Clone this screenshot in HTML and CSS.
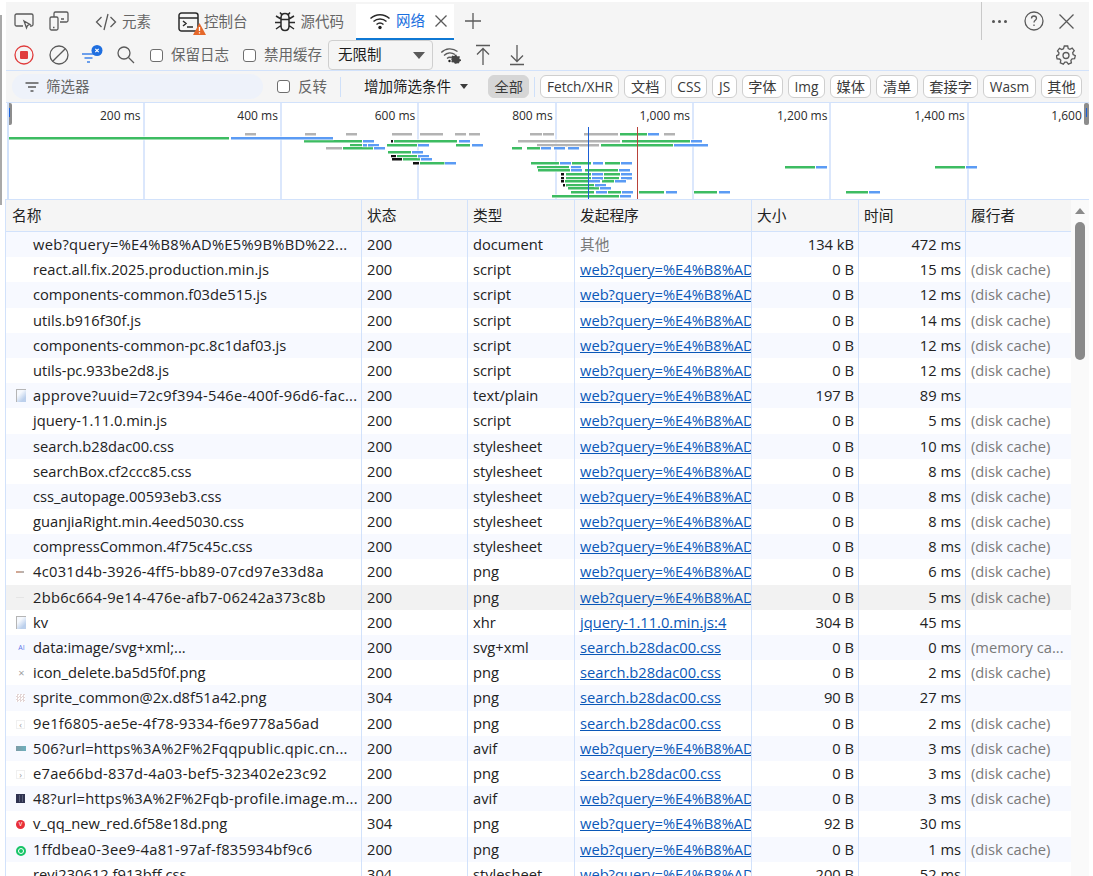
FILE: index.html
```html
<!DOCTYPE html>
<html lang="zh-CN">
<head>
<meta charset="utf-8">
<title>DevTools 网络</title>
<link rel="stylesheet" href="styles.css">
</head>
<body>
<div class="edge"></div>
<main class="devtools">
  <header class="tabbar">
    <div class="tool-icons">
      <svg class="ic" width="22" height="22" viewBox="0 0 22 22"><path d="M10 16H3.500A1.500 1.500 0 0 1 2 14.500V5.500A1.500 1.500 0 0 1 3.500 4h15A1.500 1.500 0 0 1 20 5.500V14.500A1.500 1.500 0 0 1 18.500 16H17M11 11l6 3.500-2.500 1-1 2.500z"/></svg>
      <svg class="ic" width="22" height="22" viewBox="0 0 22 22"><path d="M6 7V3.500A1.500 1.500 0 0 1 7.500 2h11A1.500 1.500 0 0 1 20 3.500V10.500A1.500 1.500 0 0 1 18.500 12H12M3.500 7h5A1.500 1.500 0 0 1 10 8.500v10A1.500 1.500 0 0 1 8.500 20h-5A1.500 1.500 0 0 1 2 18.500v-10A1.500 1.500 0 0 1 3.500 7zM5 17.500h1.500M13 9h3"/></svg>
    </div>
    <div class="tab">
      <svg class="ic" width="22" height="22" viewBox="0 0 22 22"><path d="M6.500 6 1.500 11l5 5M15.500 6l5 5-5 5M13 3 9 19"/></svg>
      <span>元素</span>
    </div>
    <div class="tab tab-console">
      <svg class="ic ic-dark" width="22" height="24" viewBox="0 0 22 24"><path d="M3.500 3h14A2.500 2.500 0 0 1 20 5.500v13a2.500 2.500 0 0 1-2.500 2.500h-14A2.500 2.500 0 0 1 1 18.500v-13A2.500 2.500 0 0 1 3.500 3zM1 8h19M5 11l3 2.500L5 16M9 17h6"/></svg>
      <svg class="warn" width="13" height="12" viewBox="0 0 13 12"><path class="warn-bg" d="M6.500 0 13 12H0z"/><path class="warn-mark" d="M6.500 4v4M6.500 9.200v1.300"/></svg>
      <span>控制台</span>
    </div>
    <div class="tab tab-bug">
      <svg class="ic ic-dark" width="22" height="22" viewBox="0 0 22 22"><path d="M7 7c0-3 1.500-4.500 4-4.500S15 4 15 7v8c0 3-1.500 4.500-4 4.500S7 18 7 15zM7 8.500h8M6 1.500 8 4M16 1.500 14 4M2 5l5 3M20 5l-5 3M1 11.500h6M21 11.500h-6M2 18l5-3.500M20 18l-5-3.500"/></svg>
      <span>源代码</span>
    </div>
    <div class="tab tab-active">
      <svg class="ic ic-dark" width="22" height="20" viewBox="0 0 22 20"><path d="M1.500 7.500C7 2.500 15 2.500 20.500 7.500M4.500 10.500c3.700-3.300 9.300-3.300 13 0M7.500 13.500c2-1.700 5-1.700 7 0"/><circle class="dot" cx="11" cy="16.500" r="1.700"/></svg>
      <span>网络</span>
      <svg class="ic" width="12" height="12" viewBox="0 0 12 12"><path d="M.5.500l11 11M11.500.500l-11 11"/></svg>
    </div>
    <svg class="ic plus" width="16" height="16" viewBox="0 0 16 16"><path d="M8 0v16M0 8h16"/></svg>
    <div class="tab-right">
      <span class="more"><i></i><i></i><i></i></span>
      <svg class="ic" width="20" height="20" viewBox="0 0 20 20"><circle cx="10" cy="10" r="9"/><path d="M7.500 7.500C7.500 6 8.700 5 10 5s2.500 1 2.500 2.300c0 2-2.500 2-2.500 4.200M10 13.500V15"/></svg>
      <svg class="ic" width="15" height="15" viewBox="0 0 15 15"><path d="M.5.500l14 14M14.500.500l-14 14"/></svg>
    </div>
  </header>

  <section class="toolbar">
    <svg class="record" width="20" height="20" viewBox="0 0 20 20"><circle class="rec-ring" cx="10" cy="10" r="9"/><rect class="rec-dot" x="6" y="6" width="8" height="8" rx="1"/></svg>
    <svg class="ic ic-clear" width="20" height="20" viewBox="0 0 20 20"><circle cx="10" cy="10" r="9"/><path d="M3.700 16.300 16.300 3.700"/></svg>
    <span class="filter-toggle">
      <svg width="22" height="20" viewBox="0 0 22 20"><path class="fl" d="M1 9h13M3.500 13h8M6 17h3"/><circle class="bd" cx="16" cy="5.500" r="5.500"/><path class="bdx" d="M14.300 3.800l3.400 3.400M17.700 3.800l-3.400 3.400"/></svg>
    </span>
    <svg class="ic ic-find" width="18" height="18" viewBox="0 0 18 18"><circle cx="7" cy="7" r="6"/><path d="m11.500 11.500 5.500 5.500"/></svg>
    <label class="check"><i class="box"></i>保留日志</label>
    <label class="check"><i class="box"></i>禁用缓存</label>
    <div class="select"><span>无限制</span><i class="caret-big"></i></div>
    <svg class="ic ic-net" width="21" height="18" viewBox="0 0 20 18"><path d="M.8 6.500C5 2 12 1.500 17 5.500M3.500 9.500c3-3 7.500-3.300 11-1M6.500 12.500c1.500-1.300 3.500-1.500 5-.8"/><circle class="dot" cx="9" cy="15" r="1.200"/><path class="gearfill" d="M15 8.500l1 .3.300 1.300 1.200.5 1.100-.7.900 1-.7 1.100.5 1.200 1.200.3v1.400l-1.200.3-.5 1.200-.9 1.100-1.300-.2-1 .5h-1.300l-.5-1-1.200-.5-1.100.3-.7-1 .5-1.200-.5-1.200-1-.4V13l1.300-.3.400-1.200-.5-1.100.9-.9 1.200.5 1.200-.5z"/></svg>
    <svg class="ic ic-up" width="16" height="22" viewBox="0 0 16 22"><path d="M1 1.500h14M8 21V5M2 10.500 8 4.500l6 6"/></svg>
    <svg class="ic ic-down" width="16" height="22" viewBox="0 0 16 22"><path d="M1 20.500h14M8 1v16M2 11.500l6 6 6-6"/></svg>
    <svg class="ic gear" width="20" height="20" viewBox="0 0 20 20"><path d="M8.300 1h3.400l.5 2.500 1.700.8 2.300-1.200 2 2.600-1.500 1.900.4 1.900 2.200 1.100-.7 3-2.500.2-1.200 1.500.5 2.500-3 1.400-1.600-2h-1.900l-1.600 2-3-1.400.5-2.500L3.600 14l-2.500-.2-.7-3 2.200-1.100.4-1.900L1.500 5.900l2-2.600 2.300 1.200 1.700-.8z"/><circle cx="10" cy="10.500" r="3"/></svg>
  </section>

  <section class="filterbar">
    <div class="search">
      <svg class="ic" width="14" height="10" viewBox="0 0 14 10"><path d="M.5 1h13M3 5h8M5.500 9h3"/></svg>
      <span>筛选器</span>
    </div>
    <label class="check invert"><i class="box"></i>反转</label>
    <i class="vr"></i>
    <div class="more-filters">增加筛选条件<i class="caret"></i></div>
    <span class="chip chip-on">全部</span>
    <i class="vr"></i>
    <span class="chip chip-en">Fetch/XHR</span>
    <span class="chip">文档</span>
    <span class="chip chip-en">CSS</span>
    <span class="chip chip-en">JS</span>
    <span class="chip">字体</span>
    <span class="chip chip-en">Img</span>
    <span class="chip">媒体</span>
    <span class="chip">清单</span>
    <span class="chip">套接字</span>
    <span class="chip chip-en">Wasm</span>
    <span class="chip">其他</span>
  </section>

  <section class="overview">
    <div class="grid-cols">
      <div class="tick">200 ms</div>
      <div class="tick">400 ms</div>
      <div class="tick">600 ms</div>
      <div class="tick">800 ms</div>
      <div class="tick">1,000 ms</div>
      <div class="tick">1,200 ms</div>
      <div class="tick">1,400 ms</div>
      <div class="tick tick-last">1,600</div>
    </div>
    <svg class="bars" width="1082" height="96" viewBox="7 103 1082 96">
      <g class="k">
        <rect x="245" y="134" width="11" height="3"/><rect x="305" y="134" width="11" height="3"/><rect x="346" y="134" width="11" height="3"/><rect x="392" y="134" width="20" height="3"/><rect x="420" y="134" width="23" height="3"/><rect x="455" y="134" width="11" height="3"/><rect x="469" y="134" width="11" height="3"/><rect x="530" y="134" width="12" height="3"/><rect x="543" y="134" width="11" height="3"/><rect x="584" y="134" width="34" height="3"/><rect x="629" y="134" width="11" height="3"/><rect x="664" y="134" width="11" height="3"/>
        <rect x="518" y="141" width="102" height="3"/><rect x="537" y="145" width="62" height="3"/><rect x="326" y="148" width="16" height="3"/>
      </g>
      <g class="g">
        <rect x="9" y="138" width="220" height="3"/><rect x="620" y="134" width="27" height="3"/>
        <rect x="304" y="141" width="58" height="3"/><rect x="394" y="141" width="63" height="3"/><rect x="622" y="141" width="68" height="3"/>
        <rect x="350" y="145" width="12" height="3"/><rect x="387" y="145" width="30" height="3"/><rect x="456" y="145" width="14" height="3"/><rect x="601" y="145" width="72" height="3"/>
        <rect x="343" y="148" width="30" height="3"/><rect x="512" y="148" width="10" height="3"/><rect x="527" y="148" width="13" height="3"/>
        <rect x="388" y="152" width="23" height="3"/><rect x="397" y="156" width="20" height="3"/><rect x="403" y="159" width="17" height="3"/>
        <rect x="420" y="163" width="25" height="3"/><rect x="531" y="163" width="28" height="3"/><rect x="572" y="163" width="19" height="3"/><rect x="605" y="163" width="15" height="3"/>
        <rect x="537" y="167" width="32" height="3"/><rect x="785" y="167" width="30" height="3"/><rect x="935" y="167" width="30" height="3"/>
        <rect x="538" y="170" width="32" height="3"/><rect x="585" y="170" width="33" height="3"/>
        <rect x="566" y="174" width="25" height="3"/><rect x="604" y="174" width="16" height="3"/>
        <rect x="566" y="178" width="25" height="3"/><rect x="604" y="178" width="15" height="3"/>
        <rect x="565" y="181" width="24" height="3"/><rect x="602" y="181" width="12" height="3"/>
        <rect x="566" y="185" width="28" height="3"/><rect x="568" y="188" width="31" height="3"/>
        <rect x="571" y="192" width="23" height="3"/><rect x="608" y="192" width="13" height="3"/><rect x="639" y="192" width="25" height="3"/><rect x="694" y="192" width="23" height="3"/><rect x="846" y="192" width="22" height="3"/>
        <rect x="552" y="196" width="67" height="3"/>
      </g>
      <g class="b">
        <rect x="231" y="138" width="102" height="3"/><rect x="648" y="134" width="11" height="3"/>
        <rect x="363" y="141" width="11" height="3"/><rect x="459" y="141" width="11" height="3"/><rect x="691" y="141" width="11" height="3"/>
        <rect x="363" y="145" width="4" height="3"/><rect x="368" y="145" width="11" height="3"/><rect x="418" y="145" width="11" height="3"/><rect x="472" y="145" width="11" height="3"/><rect x="674" y="145" width="34" height="3"/>
        <rect x="374" y="148" width="11" height="3"/><rect x="541" y="148" width="10" height="3"/><rect x="554" y="148" width="11" height="3"/><rect x="568" y="148" width="11" height="3"/>
        <rect x="412" y="152" width="11" height="3"/><rect x="418" y="156" width="11" height="3"/><rect x="421" y="159" width="11" height="3"/>
        <rect x="445" y="163" width="11" height="3"/><rect x="560" y="163" width="11" height="3"/><rect x="593" y="163" width="10" height="3"/><rect x="621" y="163" width="11" height="3"/>
        <rect x="571" y="167" width="10" height="3"/><rect x="816" y="167" width="11" height="3"/><rect x="966" y="167" width="11" height="3"/>
        <rect x="571" y="170" width="11" height="3"/><rect x="619" y="170" width="11" height="3"/>
        <rect x="592" y="174" width="11" height="3"/><rect x="621" y="174" width="11" height="3"/>
        <rect x="592" y="178" width="11" height="3"/><rect x="621" y="178" width="11" height="3"/>
        <rect x="589" y="181" width="11" height="3"/><rect x="615" y="181" width="11" height="3"/>
        <rect x="595" y="185" width="11" height="3"/><rect x="600" y="188" width="11" height="3"/>
        <rect x="596" y="192" width="11" height="3"/><rect x="622" y="192" width="11" height="3"/><rect x="666" y="192" width="11" height="3"/><rect x="719" y="192" width="11" height="3"/><rect x="869" y="192" width="11" height="3"/>
        <rect x="620" y="196" width="11" height="3"/>
      </g>
      <g class="d">
        <rect x="391" y="141" width="2" height="3"/><rect x="391" y="156" width="5" height="3"/><rect x="392" y="159" width="10" height="3"/><rect x="413" y="163" width="6" height="3"/><rect x="561" y="174" width="3" height="3"/><rect x="561" y="178" width="3" height="3"/><rect x="561" y="181" width="3" height="3"/><rect x="563" y="185" width="2" height="3"/>
      </g>
      <rect class="line-dcl" x="588" y="127" width="1" height="72"/>
      <rect class="line-load" x="637" y="127" width="1" height="72"/>
    </svg>
    <i class="handle handle-l"></i>
    <i class="handle handle-r"></i>
  </section>

  <section class="network">
    <div class="table">
      <div class="row head"><div>名称</div><div>状态</div><div>类型</div><div>发起程序</div><div>大小</div><div>时间</div><div>履行者</div></div>
      <div class="row"><div class="name wide">web?query=%E4%B8%AD%E5%9B%BD%22...</div><div>200</div><div>document</div><div class="muted">其他</div><div class="num">134 kB</div><div class="num">472 ms</div><div></div></div>
      <div class="row"><div class="name">react.all.fix.2025.production.min.js</div><div>200</div><div>script</div><div class="link">web?query=%E4%B8%AD%E5%9B%BD</div><div class="num">0 B</div><div class="num">15 ms</div><div class="muted">(disk cache)</div></div>
      <div class="row"><div class="name">components-common.f03de515.js</div><div>200</div><div>script</div><div class="link">web?query=%E4%B8%AD%E5%9B%BD</div><div class="num">0 B</div><div class="num">12 ms</div><div class="muted">(disk cache)</div></div>
      <div class="row"><div class="name">utils.b916f30f.js</div><div>200</div><div>script</div><div class="link">web?query=%E4%B8%AD%E5%9B%BD</div><div class="num">0 B</div><div class="num">14 ms</div><div class="muted">(disk cache)</div></div>
      <div class="row"><div class="name">components-common-pc.8c1daf03.js</div><div>200</div><div>script</div><div class="link">web?query=%E4%B8%AD%E5%9B%BD</div><div class="num">0 B</div><div class="num">12 ms</div><div class="muted">(disk cache)</div></div>
      <div class="row"><div class="name">utils-pc.933be2d8.js</div><div>200</div><div>script</div><div class="link">web?query=%E4%B8%AD%E5%9B%BD</div><div class="num">0 B</div><div class="num">12 ms</div><div class="muted">(disk cache)</div></div>
      <div class="row"><div class="name wide"><i class="fi fi-doc"></i>approve?uuid=72c9f394-546e-400f-96d6-fac...</div><div>200</div><div>text/plain</div><div class="link">web?query=%E4%B8%AD%E5%9B%BD</div><div class="num">197 B</div><div class="num">89 ms</div><div></div></div>
      <div class="row"><div class="name">jquery-1.11.0.min.js</div><div>200</div><div>script</div><div class="link">web?query=%E4%B8%AD%E5%9B%BD</div><div class="num">0 B</div><div class="num">5 ms</div><div class="muted">(disk cache)</div></div>
      <div class="row"><div class="name">search.b28dac00.css</div><div>200</div><div>stylesheet</div><div class="link">web?query=%E4%B8%AD%E5%9B%BD</div><div class="num">0 B</div><div class="num">10 ms</div><div class="muted">(disk cache)</div></div>
      <div class="row"><div class="name">searchBox.cf2ccc85.css</div><div>200</div><div>stylesheet</div><div class="link">web?query=%E4%B8%AD%E5%9B%BD</div><div class="num">0 B</div><div class="num">8 ms</div><div class="muted">(disk cache)</div></div>
      <div class="row"><div class="name">css_autopage.00593eb3.css</div><div>200</div><div>stylesheet</div><div class="link">web?query=%E4%B8%AD%E5%9B%BD</div><div class="num">0 B</div><div class="num">8 ms</div><div class="muted">(disk cache)</div></div>
      <div class="row"><div class="name">guanjiaRight.min.4eed5030.css</div><div>200</div><div>stylesheet</div><div class="link">web?query=%E4%B8%AD%E5%9B%BD</div><div class="num">0 B</div><div class="num">8 ms</div><div class="muted">(disk cache)</div></div>
      <div class="row"><div class="name">compressCommon.4f75c45c.css</div><div>200</div><div>stylesheet</div><div class="link">web?query=%E4%B8%AD%E5%9B%BD</div><div class="num">0 B</div><div class="num">8 ms</div><div class="muted">(disk cache)</div></div>
      <div class="row"><div class="name wide"><i class="fi fi-dash"></i>4c031d4b-3926-4ff5-bb89-07cd97e33d8a</div><div>200</div><div>png</div><div class="link">web?query=%E4%B8%AD%E5%9B%BD</div><div class="num">0 B</div><div class="num">6 ms</div><div class="muted">(disk cache)</div></div>
      <div class="row hover"><div class="name wide"><i class="fi fi-faint"></i>2bb6c664-9e14-476e-afb7-06242a373c8b</div><div>200</div><div>png</div><div class="link">web?query=%E4%B8%AD%E5%9B%BD</div><div class="num">0 B</div><div class="num">5 ms</div><div class="muted">(disk cache)</div></div>
      <div class="row"><div class="name"><i class="fi fi-doc"></i>kv</div><div>200</div><div>xhr</div><div class="link">jquery-1.11.0.min.js:4</div><div class="num">304 B</div><div class="num">45 ms</div><div></div></div>
      <div class="row"><div class="name"><i class="fi fi-ai">AI</i>data:image/svg+xml;...</div><div>200</div><div>svg+xml</div><div class="link">search.b28dac00.css</div><div class="num">0 B</div><div class="num">0 ms</div><div class="muted">(memory ca...</div></div>
      <div class="row"><div class="name"><i class="fi fi-x">×</i>icon_delete.ba5d5f0f.png</div><div>200</div><div>png</div><div class="link">search.b28dac00.css</div><div class="num">0 B</div><div class="num">2 ms</div><div class="muted">(disk cache)</div></div>
      <div class="row"><div class="name"><i class="fi fi-sprite"></i>sprite_common@2x.d8f51a42.png</div><div>304</div><div>png</div><div class="link">search.b28dac00.css</div><div class="num">90 B</div><div class="num">27 ms</div><div></div></div>
      <div class="row"><div class="name wide"><i class="fi fi-box">‹</i>9e1f6805-ae5e-4f78-9334-f6e9778a56ad</div><div>200</div><div>png</div><div class="link">search.b28dac00.css</div><div class="num">0 B</div><div class="num">2 ms</div><div class="muted">(disk cache)</div></div>
      <div class="row"><div class="name wide"><i class="fi fi-thumb"></i>506?url=https%3A%2F%2Fqqpublic.qpic.cn...</div><div>200</div><div>avif</div><div class="link">web?query=%E4%B8%AD%E5%9B%BD</div><div class="num">0 B</div><div class="num">3 ms</div><div class="muted">(disk cache)</div></div>
      <div class="row"><div class="name wide"><i class="fi fi-box">›</i>e7ae66bd-837d-4a03-bef5-323402e23c92</div><div>200</div><div>png</div><div class="link">search.b28dac00.css</div><div class="num">0 B</div><div class="num">3 ms</div><div class="muted">(disk cache)</div></div>
      <div class="row"><div class="name wide"><i class="fi fi-qr"></i>48?url=https%3A%2F%2Fqb-profile.image.m...</div><div>200</div><div>avif</div><div class="link">web?query=%E4%B8%AD%E5%9B%BD</div><div class="num">0 B</div><div class="num">3 ms</div><div class="muted">(disk cache)</div></div>
      <div class="row"><div class="name"><i class="fi fi-red">v</i>v_qq_new_red.6f58e18d.png</div><div>304</div><div>png</div><div class="link">web?query=%E4%B8%AD%E5%9B%BD</div><div class="num">92 B</div><div class="num">30 ms</div><div></div></div>
      <div class="row"><div class="name wide"><i class="fi fi-green"></i>1ffdbea0-3ee9-4a81-97af-f835934bf9c6</div><div>200</div><div>png</div><div class="link">web?query=%E4%B8%AD%E5%9B%BD</div><div class="num">0 B</div><div class="num">1 ms</div><div class="muted">(disk cache)</div></div>
      <div class="row"><div class="name">revi230612.f913bff.css</div><div>304</div><div>stylesheet</div><div class="link">web?query=%E4%B8%AD%E5%9B%BD</div><div class="num">200 B</div><div class="num">52 ms</div><div></div></div>
    </div>
    <div class="scrollbar">
      <i class="sb-up"></i>
      <i class="sb-thumb"></i>
    </div>
  </section>
</main>
</body>
</html>
```
FILE: styles.css
```css
* { box-sizing: border-box; }
html, body { height: 100%; }
body {
  margin: 0;
  display: flex;
  height: 876px;
  overflow: hidden;
  background: #fff;
  color: #1b1b1b;
  font: 14.5px/20px "Open Sans", "Noto Sans CJK SC", sans-serif;
}
i { font-style: normal; }
.edge {
  width: 6px;
  flex: none;
  background: linear-gradient(#a9a9a9, #a9a9a9) 0 15px / 2px 190px no-repeat;
}
.devtools {
  width: 1083px;
  flex: none;
  padding-top: 2px;
  display: flex;
  flex-direction: column;
}
.ic { fill: none; stroke: #5a5a5a; stroke-width: 1.300; flex: none; }
.ic-dark { stroke: #2a2a2a; stroke-width: 1.500; }
.dot { fill: #1f1f1f; stroke: none; }
.gearfill { fill: #444; stroke: none; }

.tabbar {
  height: 38px;
  background: #f5f5f5;
  display: flex;
  align-items: center;
  padding-left: 7px;
  white-space: nowrap;
}
.tool-icons { display: flex; gap: 13px; margin-right: 13px; }
.tab {
  height: 36px;
  margin-top: 2px;
  display: flex;
  align-items: center;
  gap: 5px;
  padding: 0 12px;
  color: #666;
  position: relative;
  flex: none;
}
.tab-console { padding-left: 15px; gap: 4px; }
.tab-bug { padding-left: 14px; }
.warn { position: absolute; left: 30px; top: 19px; }
.warn-bg { fill: #e5682a; }
.warn-mark { stroke: #fff; stroke-width: 1.300; fill: none; }
.tab-active {
  background: #fff;
  color: #1a6fe0;
  border-bottom: 2px solid #0f78d4;
  padding: 0 0 0 13px;
  width: 98px;
}
.tab-active .ic:last-child { margin-left: 5px; }
.plus { margin-left: 11px; }
.tab-right {
  margin-left: auto;
  height: 38px;
  width: 108px;
  border-left: 1px solid #c9c9c9;
  display: flex;
  align-items: center;
  padding-left: 10px;
}
.tab-right .ic:nth-child(2) { margin-left: 17px; margin-right: 15px; }
.more { display: flex; gap: 3px; width: 15px; }
.more i { width: 3px; height: 3px; border-radius: 50%; background: #555; }

.toolbar {
  height: 30px;
  background: #f5f5f5;
  display: flex;
  align-items: center;
  padding-left: 8px;
  border-bottom: 1px solid #d2e2fb;
  box-sizing: content-box;
  color: #666;
}
.rec-ring { fill: none; stroke: #e03c3c; stroke-width: 1.300; }
.rec-dot { fill: #e03c3c; }
.record { margin-right: 15px; flex: none; }
.ic-clear { margin-right: 12px; }
.filter-toggle { width: 22px; height: 20px; margin-right: 14px; flex: none; }
.fl { stroke: #3f83e8; fill: none; stroke-width: 1.400; }
.bd { fill: #1f6fe0; }
.bdx { stroke: #fff; stroke-width: 1.200; }
.ic-find { margin-right: 15px; }
.check { display: flex; align-items: center; gap: 8px; color: #666; white-space: nowrap; }
.box {
  width: 13px;
  height: 13px;
  border: 1px solid #6e6e6e;
  border-radius: 3px;
  background: #fff;
  flex: none;
}
.toolbar .check + .check { margin-left: 14px; }
.select {
  width: 105px;
  height: 30px;
  margin-left: 6px;
  border: 1px solid #cfcfcf;
  border-radius: 4px;
  display: flex;
  align-items: center;
  justify-content: space-between;
  padding: 0 7px 0 9px;
  color: #1b1b1b;
  flex: none;
}
.caret-big {
  border-left: 6px solid transparent;
  border-right: 6px solid transparent;
  border-top: 7px solid #5a5a5a;
}
.ic-net { margin-left: 7px; }
.ic-up { margin-left: 14px; }
.ic-down { margin-left: 18px; }
.gear { margin-left: auto; margin-right: 13px; }

.filterbar {
  height: 31px;
  background: #f5f5f5;
  display: flex;
  align-items: center;
  padding-left: 6px;
  gap: 5px;
  border-bottom: 1px solid #d2e2fb;
  box-sizing: content-box;
  white-space: nowrap;
}
.search {
  width: 251px;
  height: 25px;
  border-radius: 13px;
  background: #eef2fa;
  display: flex;
  align-items: center;
  gap: 7px;
  padding-left: 13px;
  color: #666;
  flex: none;
}
.invert { margin-left: 9px; flex: none; }
.vr { width: 1px; height: 20px; background: #cfe0f9; flex: none; }
.invert + .vr { margin-left: 8px; }
.more-filters {
  display: flex;
  align-items: center;
  gap: 9px;
  margin-left: 18px;
  margin-right: 15px;
  color: #1b1b1b;
  flex: none;
}
.caret {
  border-left: 4px solid transparent;
  border-right: 4px solid transparent;
  border-top: 5px solid #3c3c3c;
}
.chip {
  height: 23px;
  padding: 0 5.500px;
  border: 1px solid #cfcfcf;
  border-radius: 6px;
  font-size: 14.200px;
  line-height: 21px;
  background: #fff;
  color: #3a3a3a;
  flex: none;
}
.chip-en { font-size: 13.700px; }
.chip-on { background: #d6d6d6; border-color: #d6d6d6; }

.overview {
  height: 96px;
  position: relative;
  border-left: 2px solid #d2e2fb;
  margin-left: 1px;
  overflow: hidden;
  flex: none;
}
.grid-cols { display: flex; height: 100%; }
.tick {
  width: 137.400px;
  flex: none;
  border-right: 2px solid #dbe7fc;
  text-align: right;
  padding: 3px 2px 0 0;
  color: #2b2b2b;
  font-size: 12px;
}
.tick:first-child { width: 135.500px; }
.tick-last { border-right: 0; width: 120px; padding-right: 7px; }
.bars { position: absolute; left: -2px; top: 0; }
.bars g { transform: translateY(-1px); }
.bars g rect {
  height: 2.500px;
  stroke: #fff;
  stroke-width: 1.500px;
  stroke-opacity: .75;
  paint-order: stroke;
}
.bars .g { fill: #3dbc62; }
.bars .b { fill: #5b9bf4; }
.bars .k { fill: #b3b3b3; }
.bars .d { fill: #111; }
.line-dcl { fill: #1a5fd6; }
.line-load { fill: #b8423a; }
.handle {
  position: absolute;
  top: 0;
  width: 5px;
  height: 22px;
  background: #8d8d8d;
  border-radius: 2px;
}
.handle::after {
  content: "";
  position: absolute;
  left: 2px;
  top: 5px;
  width: 1px;
  height: 9px;
  background: #1a5fd6;
}
.handle-l { left: -2px; }
.handle-r { right: 0; }

.network {
  flex: 1;
  display: flex;
  min-height: 0;
  border-top: 1px solid #d2e2fb;
  border-left: 1px solid #d2e2fb;
  margin-left: -1px;
  font-size: 14.700px;
}
.table { width: 1065px; flex: none; }
.row {
  display: grid;
  grid-template-columns: 356px 106px 107px 177px 107px 107px 105px;
  height: 25.200px;
  line-height: 25px;
}
.row:nth-child(even) { background: #f7f9ff; }
.row.hover { background: #f2f2f2; }
.row > div {
  padding: 0 4px 0 5px;
  border-right: 1px solid #d2e2fb;
  white-space: nowrap;
  overflow: hidden;
  color: #222;
  position: relative;
}
.row > div:last-child { border-right: 0; }
.row.head {
  height: 32px;
  line-height: 30px;
  background: #f5f5f5;
  border-bottom: 1px solid #d2e2fb;
}
.row > .name { padding-left: 27px; }
.row > .wide { letter-spacing: .27px; }
.row.head > div:first-child { padding-left: 6px; }
.row > .num { text-align: right; }
.row > .muted { color: #7a7a7a; }
.row > .link { color: #0a58b8; text-decoration: underline; }
.fi {
  position: absolute;
  left: 10px;
  top: 7px;
  width: 11px;
  height: 11px;
  display: block;
  letter-spacing: 0;
}
.fi-doc { top: 6px; height: 13px; width: 10px; background: linear-gradient(135deg, #f5f8fd 30%, #bcd0ec 75%); border: 1px solid #b5b5b5; border-width: 1px 0 0 1px; }
.fi-dash { height: 2px; top: 12px; width: 8px; background: linear-gradient(90deg, #d9a58c, #b5b5b5); }
.fi-faint { height: 1px; top: 12px; width: 8px; background: #e5e5e5; }
.fi-ai { font-size: 7px; line-height: 11px; color: #5f78ea; text-align: center; }
.fi-x { font-size: 11px; line-height: 11px; color: #a0a0a0; text-align: center; }
.fi-box { width: 9px; height: 9px; top: 9px; font-size: 9px; line-height: 8px; color: #a0a0a0; text-align: center; border: 1px solid #f0f0f0; }
.fi-sprite { width: 9px; height: 8px; top: 9px; background: repeating-conic-gradient(#e3d5d5 0 25%, #fff 0 50%) 0 0 / 3px 3px; }
.fi-thumb { height: 5px; top: 10px; width: 10px; background: linear-gradient(90deg, #7e9ca6, #6db0bd); }
.fi-qr { width: 9px; height: 9px; top: 8px; background: repeating-linear-gradient(90deg, #2f3350 0 2px, #5a5f7a 2px 3px); border: 1px solid #2f3350; }
.fi-red { width: 9px; height: 9px; top: 9px; border-radius: 50%; background: #e8303a; color: #fff; font-size: 7px; line-height: 8px; text-align: center; }
.fi-green { width: 10px; height: 10px; top: 9px; border-radius: 50%; background: #17c468; border: 2px solid #17c468; box-shadow: inset 0 0 0 1px #fff; }

.scrollbar {
  width: 18px;
  flex: none;
  position: relative;
  background: #fafafa;
}
.sb-up {
  position: absolute;
  left: 4px;
  top: 8px;
  border-left: 5px solid transparent;
  border-right: 5px solid transparent;
  border-bottom: 6px solid #8a8a8a;
}
.sb-thumb {
  position: absolute;
  left: 4px;
  top: 22px;
  width: 10px;
  height: 138px;
  border-radius: 5px;
  background: #8a8a8a;
}
```
